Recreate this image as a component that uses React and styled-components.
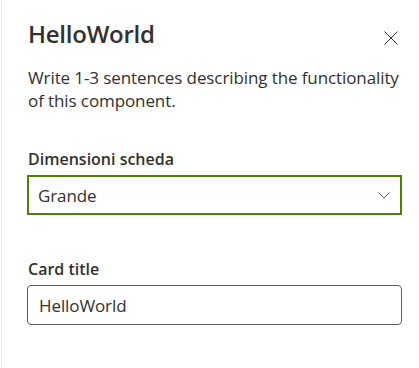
import React from "react";
import styled, { createGlobalStyle } from "styled-components";

const Global = createGlobalStyle`
  html, body { margin: 0; padding: 0; background: #ffffff; }
  body { font-family: "Open Sans", "Noto Sans", sans-serif; color: #323130; }
  * { box-sizing: border-box; }
`;

const Panel = styled.div`
  margin-left: 1px;
  width: 418px;
  height: 368px;
  border-left: 1px solid #e8e6e4;
  padding: 0 17px 0 25px;
  display: flex;
  flex-direction: column;
`;

const Header = styled.div`
  display: flex;
  align-items: flex-start;
  justify-content: space-between;
  height: 36px;
  margin-top: 16px;
`;

const Title = styled.h1`
  margin: 0 0 0 1px;
  font-size: 24px;
  font-weight: 600;
  line-height: 36px;
  letter-spacing: -0.25px;
`;

const CloseButton = styled.button`
  border: none;
  background: transparent;
  padding: 0;
  margin: 15px 4px 0 0;
  width: 14px;
  height: 14px;
  display: flex;
  cursor: pointer;
`;

const Description = styled.p`
  margin: 14px 0 0 1px;
  font-size: 17px;
  line-height: 23px;
  letter-spacing: -0.1px;
`;

const Field = styled.div`
  display: flex;
  flex-direction: column;
  margin-top: ${(p) => p.$top}px;
`;

const Label = styled.label`
  margin-left: 1px;
  font-size: 16px;
  font-weight: 600;
  line-height: 22px;
  margin-bottom: 5px;
`;

const Dropdown = styled.div`
  height: 40px;
  border: 2px solid #498205;
  display: flex;
  align-items: center;
  justify-content: space-between;
  padding: 0 10px 0 9px;
  font-size: 17px;
  letter-spacing: -0.1px;
`;

const Input = styled.div`
  height: 40px;
  border: 1px solid #605e5c;
  border-radius: 4px;
  display: flex;
  align-items: center;
  padding: 0 11px;
  font-size: 17px;
  letter-spacing: -0.1px;
`;

export default function App() {
  return (
    <>
      <Global />
      <Panel>
        <Header>
          <Title>HelloWorld</Title>
          <CloseButton aria-label="Close">
            <svg width="14" height="14" viewBox="0 0 14 14">
              <path d="M0.5 0.5 L13.5 13.5 M13.5 0.5 L0.5 13.5" stroke="#323130" strokeWidth="1" fill="none" />
            </svg>
          </CloseButton>
        </Header>
        <Description>
          Write 1-3 sentences describing the functionality of this component.
        </Description>
        <Field $top={36}>
          <Label>Dimensioni scheda</Label>
          <Dropdown>
            <span>Grande</span>
            <svg width="12" height="7" viewBox="0 0 12 7">
              <path d="M0.5 0.5 L6 6 L11.5 0.5" stroke="#605e5c" strokeWidth="1" fill="none" />
            </svg>
          </Dropdown>
        </Field>
        <Field $top={43}>
          <Label>Card title</Label>
          <Input>HelloWorld</Input>
        </Field>
      </Panel>
    </>
  );
}
